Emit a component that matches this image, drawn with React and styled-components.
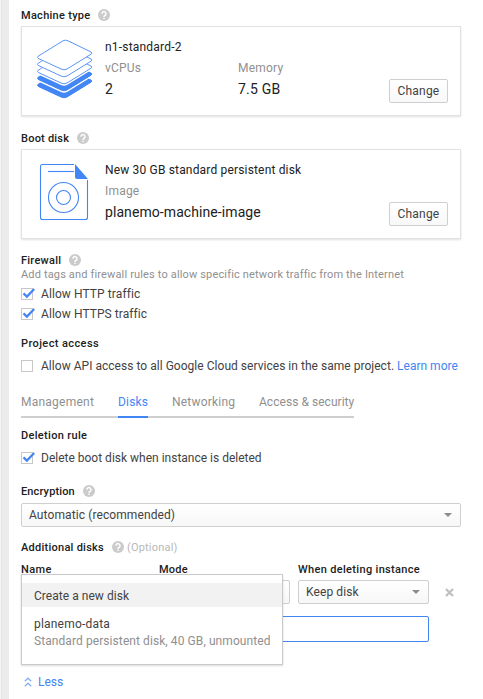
import React from "react";
import styled, { createGlobalStyle } from "styled-components";

const GlobalStyle = createGlobalStyle`
  * { box-sizing: border-box; }
  body { margin: 0; background: #fff; font-family: Roboto, "Liberation Sans", sans-serif; font-size: 12px; }
`;

const Page = styled.div`
  display: flex;
  height: 699px;
  overflow: hidden;
`;

const Gutter = styled.div`
  width: 9px;
  flex: none;
  background: linear-gradient(to right, #f6f6f6 0 1px, #e4e4e4 1px 2px, #ececec 2px);
`;

const Form = styled.main`
  width: 440px;
  margin-left: 12px;
`;

const Text = styled.span`
  color: ${(p) => p.$color || "#424242"};
  font-size: ${(p) => p.$size || 12}px;
  letter-spacing: ${(p) => p.$ls ?? 0.2}px;
  white-space: nowrap;
`;

const TitleText = styled(Text)`
  color: #212121;
  font-size: 11px;
  font-weight: 500;
`;

const TitleRow = styled.div`
  display: flex;
  align-items: center;
  height: ${(p) => p.$h || 16}px;
  margin-top: ${(p) => p.$mt}px;
  svg { margin-left: 8px; }
`;

const Hint = styled.div`
  display: flex;
  align-items: center;
  height: 12px;
`;

const Card = styled.section`
  display: flex;
  height: 90px;
  padding: 10px 12px 0 15px;
  border: 1px solid #e2e2e2;
  box-shadow: 0 1px 2px rgba(0, 0, 0, 0.12);
  > svg { flex: none; }
`;

const CardBody = styled.div`
  flex: 1;
  margin-left: 12px;
`;

const CardLine = styled.div`
  display: grid;
  grid-template-columns: 133px 1fr;
  align-items: center;
  height: ${(p) => p.$h}px;
`;

const Button = styled.button`
  width: 59px;
  height: 24px;
  margin-top: 42px;
  padding: 0 0 1px;
  border: 1px solid #cfcfcf;
  border-radius: 2px;
  background: linear-gradient(#fff, #f8f8f8);
  font-family: inherit;
`;

const CheckRow = styled.label`
  display: flex;
  align-items: center;
  height: 20px;
  margin-top: ${(p) => p.$mt || 0}px;
  svg { margin-right: 6px; flex: none; }
`;

const Link = styled.a`
  color: #4285f4;
  margin-left: 3px;
  white-space: nowrap;
`;

const Tabs = styled.nav`
  display: flex;
  gap: 24px;
  width: 333px;
  height: 26px;
  margin-top: 16px;
  box-shadow: inset 0 -2px #cfcfcf;
`;

const Tab = styled.div`
  width: ${(p) => p.$w}px;
  height: 26px;
  line-height: 20px;
  white-space: nowrap;
  color: ${(p) => (p.$active ? "#4285f4" : "#8f8f8f")};
  border-bottom: 2px solid ${(p) => (p.$active ? "#4285f4" : "transparent")};
  letter-spacing: ${(p) => p.$ls}px;
`;

const Select = styled.div`
  display: flex;
  align-items: center;
  justify-content: space-between;
  width: ${(p) => p.$w}px;
  height: 24px;
  margin-top: ${(p) => p.$mt || 0}px;
  padding: 0 8px 0 7px;
  border: 1px solid #cfcfcf;
  border-radius: 2px;
  background: linear-gradient(#fff, #f7f7f7);
`;

const DiskTable = styled.div`
  position: relative;
  margin-top: 6px;
`;

const DiskGrid = styled.div`
  display: grid;
  grid-template-columns: 130px 131px 131px 9px;
  column-gap: 8px;
  align-items: center;
  height: ${(p) => p.$h}px;
  margin-top: ${(p) => p.$mt || 0}px;
  > svg { margin-left: 8px; }
`;

const NameInput = styled.div`
  width: 408px;
  height: 26px;
  margin-top: 12px;
  border: 1px solid #4285f4;
  border-radius: 2px;
  background: #fff;
`;

const Menu = styled.div`
  position: absolute;
  top: 13px;
  left: 0;
  width: 262px;
  height: 91px;
  padding-top: 8px;
  background: #fff;
  border: 1px solid #cacaca;
  box-shadow: 0 1px 2px rgba(0, 0, 0, 0.15);
`;

const MenuItem = styled.div`
  display: flex;
  flex-direction: column;
  justify-content: center;
  height: ${(p) => p.$h}px;
  padding: 2px 0 0 12px;
  line-height: 17px;
  background: ${(p) => (p.$active ? "#f2f2f2" : "transparent")};
`;

const LessRow = styled.div`
  display: flex;
  align-items: center;
  gap: 6px;
  height: 16px;
  margin-top: 32px;
  padding-left: 3px;
`;

const QMark = styled.svg`
  display: block;
  flex: none;
`;

function Help() {
  return (
    <QMark width="12" height="12" viewBox="0 0 12 12">
      <circle cx="6" cy="6" r="6" fill="#cbcbcb" />
      <path d="M4 4.700a2 2 0 1 1 3.100 1.600C6.400 6.800 6 7 6 7.900" fill="none" stroke="#fff" strokeWidth="1.500" />
      <path d="M5.250 8.700h1.500v1.400h-1.500z" fill="#fff" />
    </QMark>
  );
}

function Check({ on }) {
  return (
    <svg width="14" height="14" viewBox="0 0 14 14">
      <rect x=".5" y="1.500" width="11" height="11" fill="#fff" stroke="#c8c8c8" />
      {on && <path d="M2.500 6.400 5.900 9.600 13.200 1.900" fill="none" stroke="#4285f4" strokeWidth="2.200" />}
    </svg>
  );
}

function Caret() {
  return (
    <svg width="8" height="4" viewBox="0 0 8 4">
      <path d="M0 0h8L4 4z" fill="#8c8c8c" />
    </svg>
  );
}

const SHEET =
  "M31 3.800 54 15q1.600 1 0 2.200L30 32q-3 1.600-6 0L1.200 21.400q-1.400-1 0-2.200L26 3.800q2.500-1.300 5 0z";

function StackIcon() {
  return (
    <svg width="56" height="62" viewBox="0 0 56 62">
      <path d={SHEET} transform="translate(0 28)" fill="#4285f4" stroke="#4285f4" />
      <path d={SHEET} transform="translate(0 23)" fill="#fff" />
      <path d={SHEET} transform="translate(0 21)" fill="#4285f4" stroke="#4285f4" />
      <path d={SHEET} transform="translate(0 16)" fill="#fff" />
      <g fill="#fff" stroke="#5b95f6">
        <path d={SHEET} transform="translate(0 14)" />
        <path d={SHEET} transform="translate(0 7)" />
        <path d={SHEET} />
      </g>
    </svg>
  );
}

function ImageIcon() {
  return (
    <svg width="56" height="62" viewBox="0 0 56 62">
      <g fill="none" stroke="#4285f4" strokeWidth="1.100">
        <path d="M37 4.500H5.500q-2 0-2 2v51q0 2 2 2h43q2 0 2-2V20" />
        <path d="M11 11.500h26" />
        <circle cx="26.500" cy="37.500" r="15" />
        <circle cx="26.500" cy="37.500" r="7" />
      </g>
      <path d="M38 4 51 19H40q-2 0-2-2z" fill="#4285f4" />
    </svg>
  );
}

function Remove() {
  return (
    <svg width="9" height="9" viewBox="0 0 9 9">
      <path d="M1 1l7 7M8 1l-7 7" stroke="#c0c0c0" strokeWidth="2.300" />
    </svg>
  );
}

function ChevronsUp() {
  return (
    <svg width="8" height="10" viewBox="0 0 8 10">
      <path d="M.8 4.300 4 1.200 7.200 4.300M.8 9.300 4 6.200 7.200 9.300" fill="none" stroke="#86aef5" strokeWidth="1.200" />
    </svg>
  );
}

const DARK = "#212121";
const GREY = "#8f8f8f";

export default function App() {
  return (
    <>
      <GlobalStyle />
      <Page>
        <Gutter />
        <Form>
          <TitleRow $mt={4} $h={22}><TitleText $ls={0.28}>Machine type</TitleText><Help /></TitleRow>
          <Card>
            <StackIcon />
            <CardBody>
              <CardLine $h={20}><Text $color={DARK}>n1-standard-2</Text></CardLine>
              <CardLine $h={22}><Text $color={GREY}>vCPUs</Text><Text $color={GREY}>Memory</Text></CardLine>
              <CardLine $h={19}><Text $color={DARK} $size={14}>2</Text><Text $color={DARK} $size={14}>7.5 GB</Text></CardLine>
            </CardBody>
            <Button><Text>Change</Text></Button>
          </Card>

          <TitleRow $mt={11} $h={22}><TitleText $ls={0.22}>Boot disk</TitleText><Help /></TitleRow>
          <Card>
            <ImageIcon />
            <CardBody>
              <CardLine $h={20}><Text $color={DARK} $ls={0.17}>New 30 GB standard persistent disk</Text></CardLine>
              <CardLine $h={22}><Text $color={GREY}>Image</Text></CardLine>
              <CardLine $h={19}><Text $color={DARK} $size={14} $ls={0.08}>planemo-machine-image</Text></CardLine>
            </CardBody>
            <Button><Text>Change</Text></Button>
          </Card>

          <TitleRow $mt={13}><TitleText $ls={0.25}>Firewall</TitleText><Help /></TitleRow>
          <Hint><Text $color={GREY} $size={11} $ls={0.155}>Add tags and firewall rules to allow specific network traffic from the Internet</Text></Hint>
          <CheckRow $mt={4}><Check on /><Text $ls={0.09}>Allow HTTP traffic</Text></CheckRow>
          <CheckRow><Check on /><Text $ls={0.07}>Allow HTTPS traffic</Text></CheckRow>

          <TitleRow $mt={11}><TitleText $ls={0.4}>Project access</TitleText></TitleRow>
          <CheckRow $mt={5}>
            <Check />
            <Text $ls={0.03}>Allow API access to all Google Cloud services in the same project.</Text>
            <Link>Learn more</Link>
          </CheckRow>

          <Tabs>
            <Tab $w={73} $ls={0.24}>Management</Tab>
            <Tab $w={30} $ls={0.2} $active>Disks</Tab>
            <Tab $w={63} $ls={0.2}>Networking</Tab>
            <Tab $w={95} $ls={0.04}>Access &amp; security</Tab>
          </Tabs>

          <TitleRow $mt={9}><TitleText $ls={0.33}>Deletion rule</TitleText></TitleRow>
          <CheckRow $mt={5}><Check on /><Text $ls={0}>Delete boot disk when instance is deleted</Text></CheckRow>

          <TitleRow $mt={15}><TitleText $ls={0.14}>Encryption</TitleText><Help /></TitleRow>
          <Select $w={440} $mt={4}><Text $ls={0.1}>Automatic (recommended)</Text><Caret /></Select>

          <TitleRow $mt={12}>
            <TitleText $ls={0.26}>Additional disks</TitleText><Help />
            <Text $color="#b8b8b8" $size={11}>&nbsp;(Optional)</Text>
          </TitleRow>
          <DiskTable>
            <DiskGrid $h={16}>
              <TitleText $ls={0.4}>Name</TitleText>
              <TitleText>Mode</TitleText>
              <TitleText $ls={0.33}>When deleting instance</TitleText>
            </DiskGrid>
            <DiskGrid $h={24} $mt={3}>
              <Select $w={130} /><Select $w={131} />
              <Select $w={131}><Text $ls={0.1}>Keep disk</Text><Caret /></Select>
              <Remove />
            </DiskGrid>
            <NameInput />
            <Menu>
              <MenuItem $h={24} $active><Text $ls={0.04}>Create a new disk</Text></MenuItem>
              <MenuItem $h={50}>
                <Text>planemo-data</Text>
                <Text $color={GREY} $ls={0.08}>Standard persistent disk, 40 GB, unmounted</Text>
              </MenuItem>
            </Menu>
          </DiskTable>
          <LessRow><ChevronsUp /><Text $color="#4285f4" $ls={0}>Less</Text></LessRow>
        </Form>
      </Page>
    </>
  );
}
